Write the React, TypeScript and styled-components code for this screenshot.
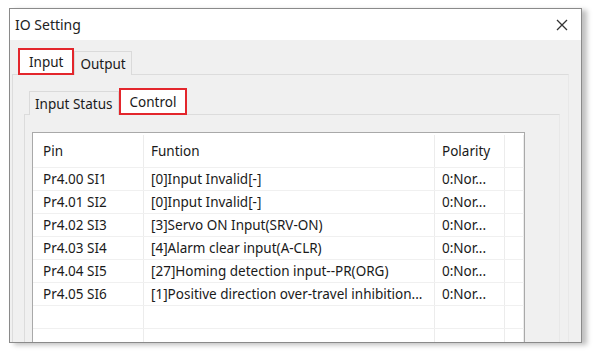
import React from 'react';
import styled, { createGlobalStyle } from 'styled-components';

const GlobalStyle = createGlobalStyle`
  body {
    margin: 0;
    background: #ffffff;
    font-family: 'Noto Sans', 'Open Sans', sans-serif;
    color: #1e1e1e;
  }
`;

const StyledPage = styled.div`
  width: 600px;
  height: 351px;
  padding: 8px 0 0 9px;
  box-sizing: border-box;
  overflow: hidden;
`;

const StyledWindow = styled.div`
  width: 573px;
  height: 335px;
  border: 1px solid #8a8a8a;
  box-sizing: border-box;
  background: #f0f0f0;
  box-shadow: 5px 2px 5px rgba(0, 0, 0, 0.25);
  display: flex;
  flex-direction: column;
`;

const StyledTitleBar = styled.div`
  height: 31px;
  flex: none;
  background: #ffffff;
  display: flex;
  align-items: center;
  justify-content: space-between;
  padding: 0 13px 0 5px;
  font-size: 14px;
  color: #222;
`;

const StyledBody = styled.div`
  flex: 1;
  padding: 8px 12px 0 2px;
  display: flex;
  flex-direction: column;
  min-height: 0;
`;

const StyledTabStrip = styled.div<{ $inset: number }>`
  display: flex;
  align-items: flex-end;
  padding-left: ${(props) => props.$inset}px;
  position: relative;
  z-index: 1;
  margin-bottom: -1px;
`;

const StyledTab = styled.div<{ $active?: boolean; $marked?: boolean }>`
  height: ${(props) => (props.$active ? 27 : 24)}px;
  padding: 0 ${(props) => (props.$active ? 9 : 5)}px;
  display: flex;
  align-items: center;
  font-size: 13.5px;
  color: #1a1a1a;
  box-sizing: border-box;
  background: ${(props) => (props.$active ? '#ffffff' : '#f0f0f0')};
  border: ${(props) =>
    props.$marked ? '2px solid #e3262c' : '1px solid #dadada'};
  border-bottom: ${(props) => (props.$marked ? '2px solid #e3262c' : 'none')};
`;

const StyledPanel = styled.div<{ $pad: string }>`
  flex: 1;
  border: 1px solid #dcdcdc;
  border-bottom: none;
  border-right-color: #e8e8e8;
  background: #f0f0f0;
  padding: ${(props) => props.$pad};
  display: flex;
  flex-direction: column;
  min-height: 0;
`;

const StyledList = styled.div`
  flex: 1;
  width: 491px;
  background: #ffffff;
  border: 1px solid #a9a9a9;
  border-bottom: none;
  overflow: hidden;
`;

const StyledRow = styled.div<{ $header?: boolean }>`
  display: grid;
  grid-template-columns: 111px 291px 70px 1fr;
  height: ${(props) => (props.$header ? 35 : 23)}px;
  padding-top: ${(props) => (props.$header ? 2 : 0)}px;
  border-bottom: 1px solid #f0f0f0;
  box-sizing: border-box;
`;

const StyledCell = styled.div<{ $first?: boolean }>`
  display: flex;
  align-items: center;
  padding-left: ${(props) => (props.$first ? 10 : 7)}px;
  border-right: 1px solid #ececec;
  font-size: 13.5px;
  color: #1a1a1a;
  white-space: nowrap;
  overflow: hidden;
`;

const CloseIcon = () => (
  <svg width="12" height="12" viewBox="0 0 12 12">
    <path d="M1 1 L11 11 M11 1 L1 11" stroke="#333" strokeWidth="1.3" fill="none" />
  </svg>
);

const rows = [
  ['Pr4.00 SI1', '[0]Input Invalid[-]', '0:Nor...'],
  ['Pr4.01 SI2', '[0]Input Invalid[-]', '0:Nor...'],
  ['Pr4.02 SI3', '[3]Servo ON Input(SRV-ON)', '0:Nor...'],
  ['Pr4.03 SI4', '[4]Alarm clear input(A-CLR)', '0:Nor...'],
  ['Pr4.04 SI5', '[27]Homing detection input--PR(ORG)', '0:Nor...'],
  ['Pr4.05 SI6', '[1]Positive direction over-travel inhibition...', '0:Nor...'],
  ['', '', ''],
  ['', '', ''],
];

const App = () => {
  return (
    <>
      <GlobalStyle />
      <StyledPage>
        <StyledWindow>
          <StyledTitleBar>
            <span>IO Setting</span>
            <CloseIcon />
          </StyledTitleBar>
          <StyledBody>
            <StyledTabStrip $inset={6}>
              <StyledTab $active $marked>Input</StyledTab>
              <StyledTab>Output</StyledTab>
            </StyledTabStrip>
            <StyledPanel $pad="13px 8px 0 11px">
              <StyledTabStrip $inset={5}>
                <StyledTab>Input Status</StyledTab>
                <StyledTab $active $marked>Control</StyledTab>
              </StyledTabStrip>
              <StyledPanel $pad="17px 8px 0 7px">
                <StyledList>
                  <StyledRow $header>
                    <StyledCell $first>Pin</StyledCell>
                    <StyledCell>Funtion</StyledCell>
                    <StyledCell>Polarity</StyledCell>
                    <StyledCell />
                  </StyledRow>
                  {rows.map((r, i) => (
                    <StyledRow key={i}>
                      <StyledCell $first>{r[0]}</StyledCell>
                      <StyledCell>{r[1]}</StyledCell>
                      <StyledCell>{r[2]}</StyledCell>
                      <StyledCell />
                    </StyledRow>
                  ))}
                </StyledList>
              </StyledPanel>
            </StyledPanel>
          </StyledBody>
        </StyledWindow>
      </StyledPage>
    </>
  );
};

export default App;
